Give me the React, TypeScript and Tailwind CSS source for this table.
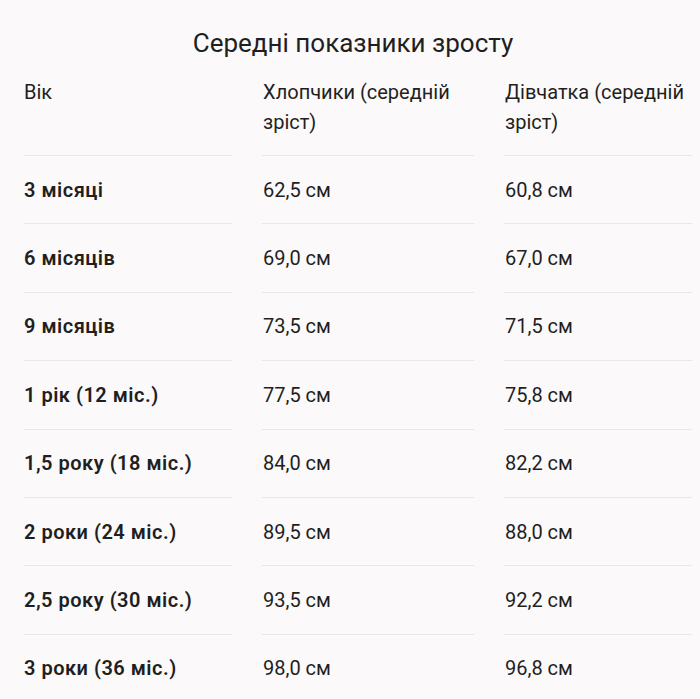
const rows: [string, string, string][] = [
  ['3 місяці', '62,5 см', '60,8 см'],
  ['6 місяців', '69,0 см', '67,0 см'],
  ['9 місяців', '73,5 см', '71,5 см'],
  ['1 рік (12 міс.)', '77,5 см', '75,8 см'],
  ['1,5 року (18 міс.)', '84,0 см', '82,2 см'],
  ['2 роки (24 міс.)', '89,5 см', '88,0 см'],
  ['2,5 року (30 міс.)', '93,5 см', '92,2 см'],
  ['3 роки (36 міс.)', '98,0 см', '96,8 см'],
]

export default function App() {
  return (
    <div className="min-h-[699px] bg-[#fbf9f9] pl-6 pr-2 text-[#1f1f1f] font-['Roboto',sans-serif] overflow-hidden">
      <h1 className="pt-[28px] pr-[10px] text-center text-[26px] leading-[30px] font-normal">
        Середні показники зросту
      </h1>
      <div className="mt-[19px] grid grid-cols-[208px_212px_188px] gap-x-[30px] text-[20px]">
        <div className="border-b border-[#e9e7e7] pb-[18px] leading-[30px]">Вік</div>
        <div className="border-b border-[#e9e7e7] pb-[18px] pl-[1px] leading-[30px]">Хлопчики (середній зріст)</div>
        <div className="border-b border-[#e9e7e7] pb-[18px] pl-[1px] leading-[30px]">Дівчатка (середній зріст)</div>
        {rows.map(([age, boys, girls]) => (
          <div key={age} className="contents">
            <div className="flex h-[68.4px] items-center border-b border-[#e9e7e7] font-semibold tracking-[0.5px]">{age}</div>
            <div className="flex h-[68.4px] items-center border-b border-[#e9e7e7] pl-[1px]">{boys}</div>
            <div className="flex h-[68.4px] items-center border-b border-[#e9e7e7] pl-[1px]">{girls}</div>
          </div>
        ))}
      </div>
    </div>
  )
}
